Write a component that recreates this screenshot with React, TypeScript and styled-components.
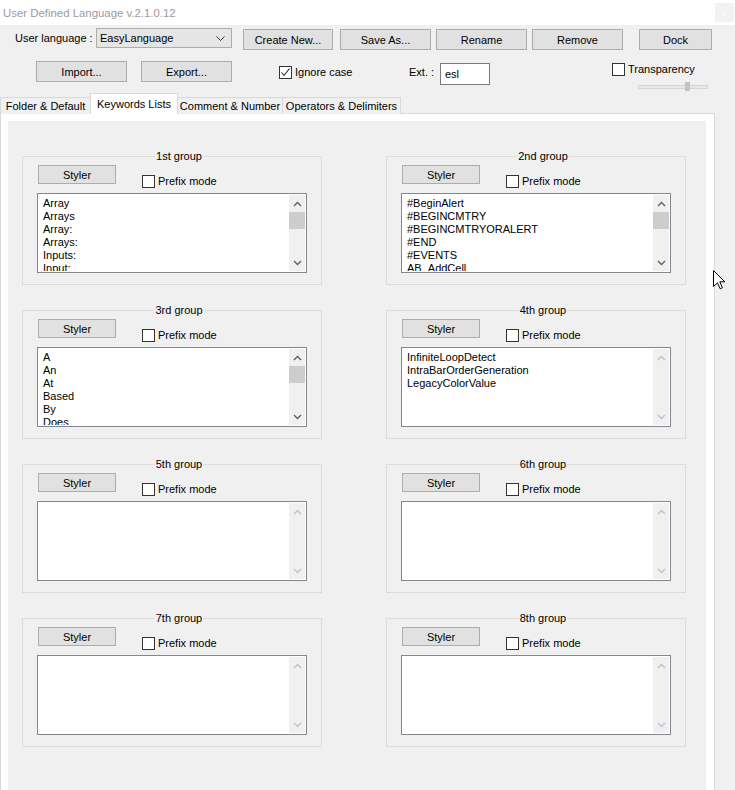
import React from "react";
import styled, { createGlobalStyle } from "styled-components";

const GlobalStyle = createGlobalStyle`
  html, body {
    margin: 0;
    padding: 0;
    background: #f0f0f0;
  }
  body {
    font-family: "Liberation Sans", Arial, sans-serif;
    font-size: 11px;
    color: #000;
  }
`;

const Window = styled.div`
  position: relative;
  width: 735px;
  height: 790px;
  overflow: hidden;
  background: #f0f0f0;
  display: flex;
  flex-direction: column;
`;

const TitleBar = styled.div`
  flex: none;
  height: 25px;
  box-sizing: border-box;
  padding: 0 1px 0 3px;
  background: #fff;
  display: flex;
  align-items: center;
  justify-content: space-between;
`;

const Title = styled.span`
  font-size: 11.4px;
  color: #9b9b9b;
`;

const CloseBox = styled.span`
  width: 19px;
  height: 19px;
  background: #f2f2f2;
  color: #fcfcfc;
  font-size: 9px;
  display: flex;
  align-items: center;
  justify-content: center;
`;

const ToolRow = styled.div<{ $mt: number; $h: number; $pl: number }>`
  flex: none;
  display: flex;
  align-items: flex-start;
  margin-top: ${(p) => p.$mt}px;
  height: ${(p) => p.$h}px;
  padding-left: ${(p) => p.$pl}px;
`;

const Label = styled.span<{ $w?: number; $mt?: number; $ml?: number }>`
  flex: none;
  width: ${(p) => (p.$w ? `${p.$w}px` : "auto")};
  margin: ${(p) => p.$mt ?? 0}px 0 0 ${(p) => p.$ml ?? 0}px;
  line-height: 13px;
  white-space: nowrap;
`;

const Button = styled.button<{ $w: number; $h?: number; $ml?: number; $mt?: number }>`
  flex: none;
  box-sizing: border-box;
  width: ${(p) => p.$w}px;
  height: ${(p) => p.$h ?? 21}px;
  margin: ${(p) => p.$mt ?? 0}px 0 0 ${(p) => p.$ml ?? 0}px;
  padding: 0;
  background: #e1e1e1;
  border: 1px solid #adadad;
  font-family: inherit;
  font-size: 11px;
  font-weight: 400;
  color: #000;
`;

const Combo = styled.div`
  flex: none;
  box-sizing: border-box;
  width: 136px;
  height: 20px;
  background: #e5e5e5;
  border: 1px solid #adadad;
  display: flex;
  align-items: center;
  justify-content: space-between;
  padding: 0 6px 0 3px;
`;

const CheckField = styled.label<{ $w?: number; $mt?: number; $ml?: number }>`
  flex: none;
  display: flex;
  align-items: center;
  gap: 3px;
  width: ${(p) => (p.$w ? `${p.$w}px` : "auto")};
  margin: ${(p) => p.$mt ?? 0}px 0 0 ${(p) => p.$ml ?? 0}px;
  line-height: 13px;
  white-space: nowrap;
`;

const CheckBox = styled.span`
  flex: none;
  box-sizing: border-box;
  width: 13px;
  height: 13px;
  background: #fff;
  border: 1px solid #333;
  display: flex;
  align-items: center;
  justify-content: center;
`;

const TextBox = styled.div`
  flex: none;
  box-sizing: border-box;
  width: 50px;
  height: 22px;
  margin-top: 2px;
  background: #fff;
  border: 1px solid #7a7a7a;
  padding-left: 4px;
  display: flex;
  align-items: center;
`;

const TransparencyBlock = styled.div`
  flex: none;
  margin: 2px 27px 0 auto;
  display: flex;
  flex-direction: column;
`;

const Slider = styled.div`
  position: relative;
  width: 70px;
  height: 9px;
  margin: 6px 0 0 26px;
  display: flex;
  align-items: center;
`;

const SliderTrack = styled.div`
  width: 100%;
  height: 4px;
  box-sizing: border-box;
  background: #e7e7e7;
  border: 1px solid #d6d6d6;
`;

const SliderThumb = styled.div`
  position: absolute;
  left: 47px;
  top: 0;
  width: 5px;
  height: 9px;
  background: #c4c4c4;
`;

const TabStrip = styled.div`
  flex: none;
  position: relative;
  z-index: 1;
  height: 21px;
  margin-bottom: -1px;
  display: flex;
  align-items: flex-end;
`;

const Tab = styled.div<{ $w: number; $active?: boolean }>`
  flex: none;
  box-sizing: border-box;
  width: ${(p) => p.$w}px;
  height: ${(p) => (p.$active ? 21 : 17)}px;
  margin-left: -1px;
  padding-bottom: ${(p) => (p.$active ? 1 : 0)}px;
  background: ${(p) => (p.$active ? "#fff" : "#f0f0f0")};
  border: 1px solid #d9d9d9;
  border-bottom: none;
  position: relative;
  z-index: ${(p) => (p.$active ? 2 : 1)};
  display: flex;
  align-items: center;
  justify-content: center;
  white-space: nowrap;

  &:first-child {
    margin-left: 0;
  }
`;

const TabPage = styled.div`
  flex: none;
  box-sizing: border-box;
  width: 715px;
  height: 720px;
  background: #fff;
  border: 1px solid #d9d9d9;
  padding: 7px 8px 0 7px;
  display: flex;
`;

const Panel = styled.div`
  flex: 1;
  background: #f0f0f0;
  padding: 29px 0 0 14px;
  display: grid;
  grid-template-columns: 300px 300px;
  column-gap: 64px;
  row-gap: 19px;
  align-content: start;
`;

const Group = styled.fieldset`
  box-sizing: border-box;
  width: 300px;
  min-width: 0;
  margin: 0;
  padding: 3px 0 11px 14px;
  border: 1px solid #dcdcdc;
`;

const Legend = styled.legend`
  margin: 0 auto;
  padding: 0 1px;
  font-size: 11px;
  font-weight: 400;
  line-height: 12px;
`;

const GroupTop = styled.div`
  display: flex;
  align-items: flex-start;
  height: 28px;
`;

const ListBox = styled.div`
  box-sizing: border-box;
  width: 270px;
  height: 80px;
  background: #fff;
  border: 1px solid #828790;
  padding: 1px;
  display: flex;
`;

const Items = styled.div`
  flex: 1;
  overflow: hidden;
  padding: 2px 0 0 4px;
`;

const Item = styled.div`
  line-height: 13px;
  white-space: nowrap;
`;

const ScrollBar = styled.div`
  flex: none;
  width: 16px;
  background: #f0f0f0;
  display: flex;
  flex-direction: column;
`;

const ScrollArrow = styled.div`
  flex: none;
  height: 17px;
  display: flex;
  align-items: center;
  justify-content: center;
`;

const ScrollThumb = styled.div`
  flex: none;
  height: 17px;
  background: #cdcdcd;
`;

const ScrollTrack = styled.div`
  flex: 1;
`;

const Cursor = styled.svg`
  position: absolute;
  left: 713px;
  top: 270px;
`;

const Chevron = ({ up, color }: { up?: boolean; color: string }) => (
  <svg width="9" height="6" viewBox="0 0 9 6">
    <path
      d={up ? "M1 5 L4.5 1.5 L8 5" : "M1 1 L4.5 4.5 L8 1"}
      fill="none"
      stroke={color}
      strokeWidth="1.4"
    />
  </svg>
);

const Check = ({ checked }: { checked?: boolean }) => (
  <CheckBox>
    {checked && (
      <svg width="11" height="11" viewBox="0 0 11 11">
        <path d="M1.5 5.5 L4 8.5 L9.5 1.5" fill="none" stroke="#222" strokeWidth="1.1" />
      </svg>
    )}
  </CheckBox>
);

type GroupData = { title: string; items: string[]; active: boolean };

const groups: GroupData[] = [
  { title: "1st group", items: ["Array", "Arrays", "Array:", "Arrays:", "Inputs:", "Input:"], active: true },
  {
    title: "2nd group",
    items: ["#BeginAlert", "#BEGINCMTRY", "#BEGINCMTRYORALERT", "#END", "#EVENTS", "AB_AddCell"],
    active: true,
  },
  { title: "3rd group", items: ["A", "An", "At", "Based", "By", "Does"], active: true },
  {
    title: "4th group",
    items: ["InfiniteLoopDetect", "IntraBarOrderGeneration", "LegacyColorValue"],
    active: false,
  },
  { title: "5th group", items: [], active: false },
  { title: "6th group", items: [], active: false },
  { title: "7th group", items: [], active: false },
  { title: "8th group", items: [], active: false },
];

const KeywordGroup = ({ group }: { group: GroupData }) => {
  const arrow = group.active ? "#606060" : "#c2c2c2";
  return (
    <Group>
      <Legend>{group.title}</Legend>
      <GroupTop>
        <Button $w={78} $h={19} $ml={1}>
          Styler
        </Button>
        <CheckField $ml={26} $mt={10}>
          <Check />
          Prefix mode
        </CheckField>
      </GroupTop>
      <ListBox>
        <Items>
          {group.items.map((it) => (
            <Item key={it}>{it}</Item>
          ))}
        </Items>
        <ScrollBar>
          <ScrollArrow>
            <Chevron up color={arrow} />
          </ScrollArrow>
          {group.active && <ScrollThumb />}
          <ScrollTrack />
          <ScrollArrow>
            <Chevron color={arrow} />
          </ScrollArrow>
        </ScrollBar>
      </ListBox>
    </Group>
  );
};

const App = () => {
  return (
    <Window>
      <GlobalStyle />
      <TitleBar>
        <Title>User Defined Language v.2.1.0.12</Title>
        <CloseBox>x</CloseBox>
      </TitleBar>

      <ToolRow $mt={3} $h={22} $pl={15}>
        <Label $w={81} $mt={4}>
          User language :
        </Label>
        <Combo>
          <span>EasyLanguage</span>
          <svg width="9" height="5" viewBox="0 0 9 5">
            <path d="M0.5 0.5 L4.5 4.5 L8.5 0.5" fill="none" stroke="#333" strokeWidth="1" />
          </svg>
        </Combo>
        <Button $w={90} $ml={11} $mt={1}>
          Create New...
        </Button>
        <Button $w={91} $ml={7} $mt={1}>
          Save As...
        </Button>
        <Button $w={91} $ml={5} $mt={1}>
          Rename
        </Button>
        <Button $w={91} $ml={5} $mt={1}>
          Remove
        </Button>
        <Button $w={73} $ml={16} $mt={1}>
          Dock
        </Button>
      </ToolRow>

      <ToolRow $mt={11} $h={32} $pl={36}>
        <Button $w={91}>Import...</Button>
        <Button $w={91} $ml={14}>
          Export...
        </Button>
        <CheckField $w={130} $ml={47} $mt={5}>
          <Check checked />
          Ignore case
        </CheckField>
        <Label $w={31} $mt={5}>
          Ext. :
        </Label>
        <TextBox>esl</TextBox>
        <TransparencyBlock>
          <CheckField>
            <Check />
            Transparency
          </CheckField>
          <Slider>
            <SliderTrack />
            <SliderThumb />
          </Slider>
        </TransparencyBlock>
      </ToolRow>

      <TabStrip>
        <Tab $w={91}>Folder &amp; Default</Tab>
        <Tab $w={88} $active>
          Keywords Lists
        </Tab>
        <Tab $w={106}>Comment &amp; Number</Tab>
        <Tab $w={119}>Operators &amp; Delimiters</Tab>
      </TabStrip>

      <TabPage>
        <Panel>
          {groups.map((g) => (
            <KeywordGroup key={g.title} group={g} />
          ))}
        </Panel>
      </TabPage>

      <Cursor width="13" height="20" viewBox="0 0 13 20">
        <path
          d="M0.5 0.5 L0.5 16.5 L4.5 12.8 L7.2 18.8 L9.4 17.8 L6.8 11.8 L11.8 11.8 Z"
          fill="#fff"
          stroke="#000"
          strokeWidth="1"
          strokeLinejoin="round"
        />
      </Cursor>
    </Window>
  );
};

export default App;
